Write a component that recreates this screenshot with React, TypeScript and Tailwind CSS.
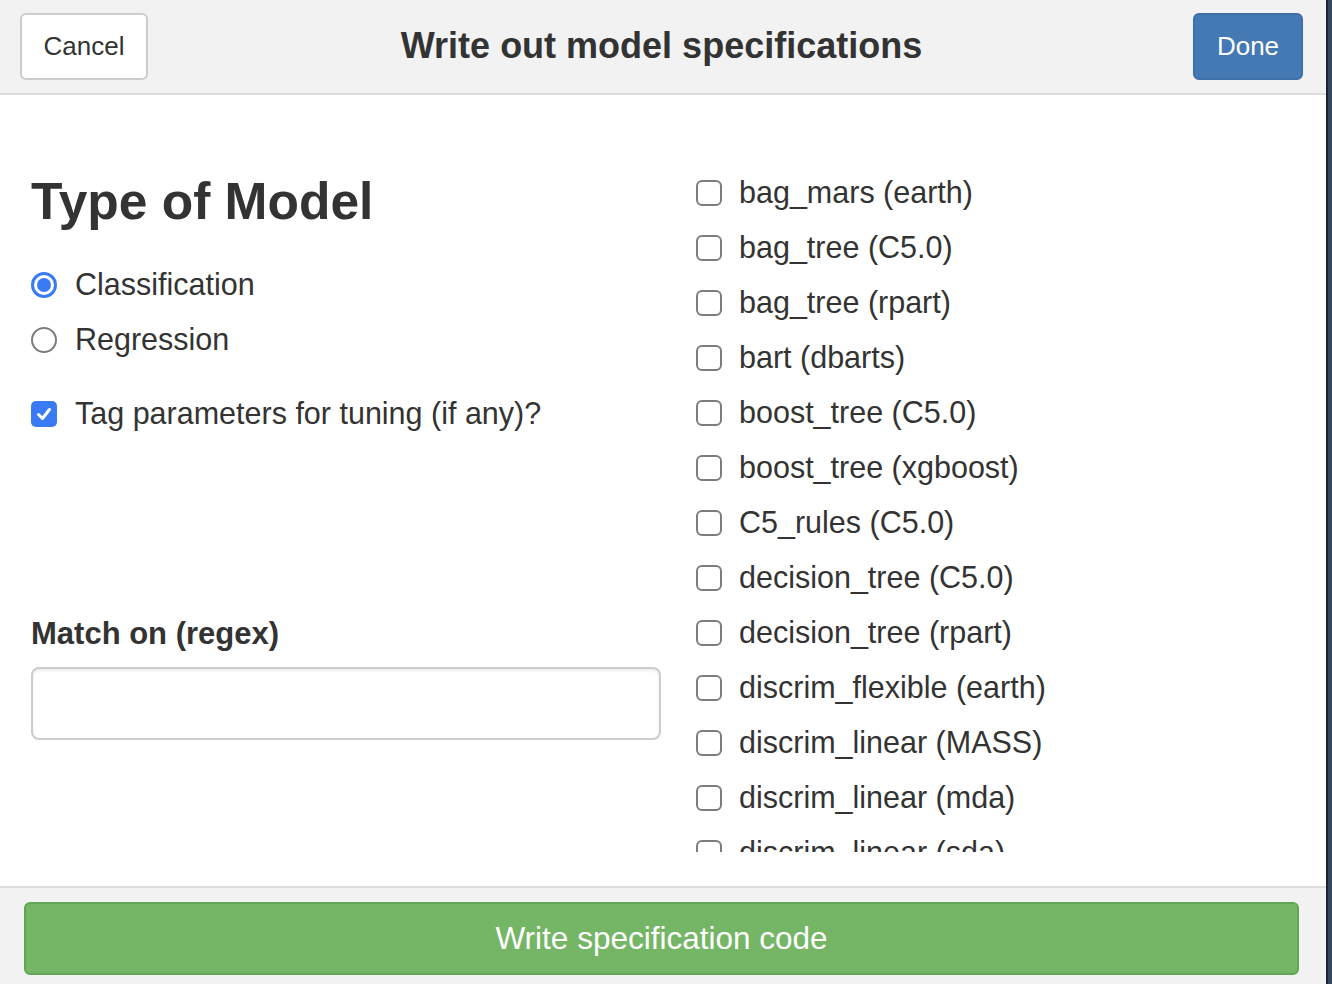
import React from 'react';

const models = [
  'bag_mars (earth)',
  'bag_tree (C5.0)',
  'bag_tree (rpart)',
  'bart (dbarts)',
  'boost_tree (C5.0)',
  'boost_tree (xgboost)',
  'C5_rules (C5.0)',
  'decision_tree (C5.0)',
  'decision_tree (rpart)',
  'discrim_flexible (earth)',
  'discrim_linear (MASS)',
  'discrim_linear (mda)',
  'discrim_linear (sda)',
  'discrim_quad (MASS)',
];

function Radio({ checked }: { checked?: boolean }) {
  if (checked) {
    return (
      <span className="w-[26px] h-[26px] rounded-full border-[3px] border-[#3a7bf5] flex items-center justify-center shrink-0">
        <span className="w-[14px] h-[14px] rounded-full bg-[#3a7bf5]"></span>
      </span>
    );
  }
  return <span className="w-[26px] h-[26px] rounded-full border-2 border-[#7d7d7d] bg-white shrink-0"></span>;
}

function Box({ checked }: { checked?: boolean }) {
  if (checked) {
    return (
      <span className="w-[26px] h-[26px] rounded-[5px] bg-[#3a7bf5] flex items-center justify-center shrink-0">
        <svg width="18" height="18" viewBox="0 0 18 18" fill="none">
          <path d="M3.5 9.5 L7.5 13.5 L14.5 4.5" stroke="white" strokeWidth="3" strokeLinecap="round" strokeLinejoin="round" />
        </svg>
      </span>
    );
  }
  return <span className="w-[26px] h-[26px] rounded-[6px] border-2 border-[#7d7d7d] bg-white shrink-0"></span>;
}

export default function App() {
  return (
    <div className="flex w-[1332px] h-[984px] overflow-hidden font-['Liberation_Sans',Arial,sans-serif] text-[#333333]">
      <div className="flex flex-col w-[1326px] h-full">
        {/* header */}
        <div className="h-[95px] shrink-0 bg-[#f2f2f2] border-b-2 border-[#dddddd] grid grid-cols-[1fr_auto_1fr] items-center pl-[20px] pr-[23px]">
          <div>
            <button className="w-[128px] h-[67px] bg-white border-2 border-[#cccccc] rounded-[6px] text-[26px] text-[#333333]">
              Cancel
            </button>
          </div>
          <h1 className="text-[36px] font-bold leading-none text-[#333333] -mt-[2px]">Write out model specifications</h1>
          <div className="flex justify-end">
            <button className="w-[110px] h-[67px] bg-[#4479b3] border-2 border-[#3d6ea5] rounded-[6px] text-[26px] text-white">
              Done
            </button>
          </div>
        </div>

        {/* body */}
        <div className="flex-1 bg-white flex pl-[31px]">
          <div className="w-[630px] flex flex-col">
            <h2 className="mt-[76px] text-[51.5px] leading-[60px] font-bold">Type of Model</h2>
            <div className="mt-[26px] h-[55px] flex items-center gap-[18px] text-[30.5px]">
              <Radio checked />
              <span>Classification</span>
            </div>
            <div className="h-[55px] flex items-center gap-[18px] text-[30.5px]">
              <Radio />
              <span>Regression</span>
            </div>
            <div className="mt-[19px] h-[55px] flex items-center gap-[18px] text-[30.5px]">
              <Box checked />
              <span>Tag parameters for tuning (if any)?</span>
            </div>
            <div className="mt-[166px] h-[55px] flex items-center text-[31px] font-bold">Match on (regex)</div>
            <input
              className="mt-[5px] h-[73px] w-full border-2 border-[#cccccc] rounded-[8px] shadow-[inset_0_2px_3px_rgba(0,0,0,0.08)] outline-none px-4 text-[28px]"
              type="text"
            />
          </div>
          <div className="ml-[35px] mt-[70px] h-[687px] overflow-hidden flex flex-col">
            {models.map((m) => (
              <div key={m} className="h-[55px] shrink-0 flex items-center gap-[17px] text-[30.5px]">
                <Box />
                <span className="whitespace-nowrap">{m}</span>
              </div>
            ))}
          </div>
        </div>

        {/* footer */}
        <div className="h-[98px] shrink-0 bg-[#f2f2f2] border-t-2 border-[#dddddd] pl-[24px] pr-[27px] pt-[14px]">
          <button className="w-full h-[73px] bg-[#74b666] border-2 border-[#62a655] rounded-[6px] text-white text-[31.5px] leading-none">
            Write specification code
          </button>
        </div>
      </div>
      <div className="w-[2px] h-full bg-[#1b2333]"></div>
      <div className="w-[4px] h-full bg-[#34465c]"></div>
    </div>
  );
}
